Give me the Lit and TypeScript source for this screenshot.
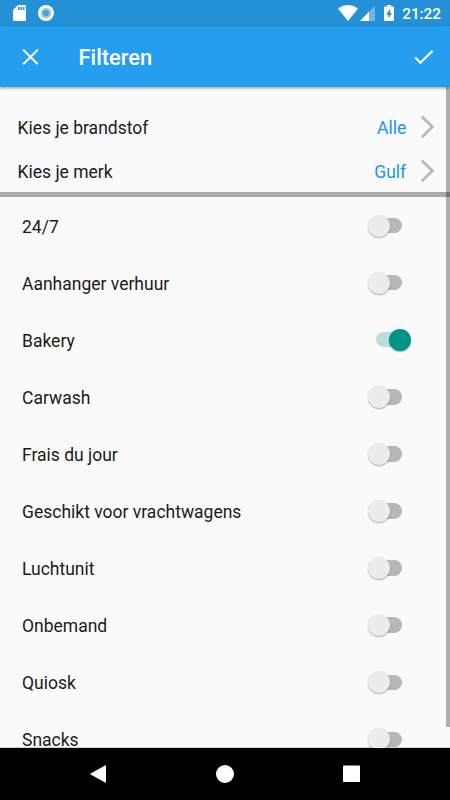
import { LitElement, html, css } from "lit";
import { customElement, property } from "lit/decorators.js";
import { classMap } from "lit/directives/class-map.js";

@customElement("toggle-switch")
class ToggleSwitch extends LitElement {
  @property({ type: Boolean }) on = false;

  static styles = css`
    :host { display: block; width: 44px; height: 22px; }
    .switch { display: grid; grid-template-columns: 44px; height: 22px; align-items: center; }
    .track, .thumb { grid-area: 1 / 1; }
    .track { width: 30.6px; height: 15.4px; border-radius: 8px; background: #b7b7b7; margin-left: 4.4px; }
    .thumb { width: 22px; height: 22px; border-radius: 50%; background: #ececec; box-shadow: 0 1px 1.5px rgba(0, 0, 0, 0.32); z-index: 1; margin-left: 0.7px; }
    .on .track { background: #b7e0dc; margin-left: 9px; }
    .on .thumb { background: #009485; margin-left: 21.7px; }
  `;

  render() {
    return html`<div class=${classMap({ switch: true, on: this.on })}>
      <div class="track"></div>
      <div class="thumb"></div>
    </div>`;
  }
}

@customElement("app-root")
class AppRoot extends LitElement {
  private choices = [
    { label: "Kies je brandstof", value: "Alle" },
    { label: "Kies je merk", value: "Gulf" },
  ];

  private facilities = [
    "24/7", "Aanhanger verhuur", "Bakery", "Carwash", "Frais du jour",
    "Geschikt voor vrachtwagens", "Luchtunit", "Onbemand", "Quiosk", "Snacks",
  ];

  static styles = css`
    :host { display: block; width: 450px; height: 800px; overflow: hidden; font-family: Roboto, sans-serif; }
    * { box-sizing: border-box; }
    svg { display: block; }
    .screen { display: flex; flex-direction: column; height: 800px; background: #fafafa; }
    .status { flex: none; height: 26px; background: #2490d5; display: flex; align-items: center; justify-content: space-between; }
    .time { color: #fff; font-size: 15.3px; font-weight: 500; line-height: 26px; padding-top: 2px; }
    .status-right { display: flex; align-items: center; padding-right: 9px; height: 26px; }
    .bar { flex: none; height: 61px; background: #259eef; display: flex; align-items: center; padding: 0 13.5px 0 17px; box-shadow: 0 1px 3px rgba(0, 0, 0, 0.4); z-index: 2; }
    .title { flex: 1; margin-left: 35.5px; color: #fff; font-size: 21.9px; font-weight: 500; line-height: 30px; padding-top: 2px; }
    .body { position: relative; flex: 1; min-height: 0; overflow: hidden; color: #1b1b1b; font-size: 17.5px; }
    .choices { padding-top: 18.6px; height: 105.4px; }
    .choice { height: 43.7px; display: flex; align-items: center; padding: 0 14.6px 0 17.5px; }
    .name { flex: 1; padding-top: 2px; }
    .value { color: #1a94f0; margin-right: 14.2px; padding-top: 2px; }
    .divider { height: 4.6px; background: #a9a9a9; }
    .row { height: 57.1px; display: flex; align-items: center; justify-content: space-between; padding: 0 38.7px 0 22px; }
    .label { padding-top: 2px; }
    .scrollbar { position: absolute; top: 0; right: 0; width: 4.4px; height: 640.4px; background: rgba(0, 0, 0, 0.3); }
    .edge { position: absolute; left: 0; right: 0; bottom: 0; height: 1px; background: #d0d0d0; }
    .nav { flex: none; height: 52.5px; background: #000; }
  `;

  render() {
    return html`<div class="screen">
      <div class="status">
        <svg width="60" height="26" viewBox="0 0 60 26">
          <path fill="#fff" d="M18 5h7q1 0 1 1v14q0 1-1 1H14q-1 0-1-1V10z" />
          <path fill="#2490d5" d="M17.9 7h1.6v3h-1.6zM20.4 7H22v3h-1.6zM22.9 7h1.6v3h-1.6z" />
          <circle cx="46" cy="13" r="8" fill="#fff" />
          <circle cx="46" cy="13" r="5.3" fill="#9bc9e9" />
          <circle cx="46" cy="13" r="3.1" fill="#4b9fd8" />
        </svg>
        <div class="status-right">
          <svg width="65" height="26" viewBox="337 0 65 26">
            <path fill="#fff" d="M338 8.400Q348 1.800 358 8.400L348 21z" />
            <path fill="#6fb7e6" d="M375 5.700V21h-15z" />
            <path fill="#fff" d="M369 11.800V21h-9z" />
            <path fill="#fff" d="M387 5h4v1.600h2q1 0 1 1V20q0 1-1 1h-8q-1 0-1-1V7.600q0-1 1-1h2z" />
            <path fill="#2490d5" d="M390 9l-3.800 5.800h2.200V18.600l3.600-5.600h-2z" />
          </svg>
          <span class="time">21:22</span>
        </div>
      </div>
      <div class="bar">
        <svg width="26" height="26" viewBox="0 0 26 26" fill="none" stroke="#fff" stroke-width="1.900">
          <path d="M6.200 5.800l14.600 14.400M20.800 5.800L6.200 20.200" />
        </svg>
        <div class="title">Filteren</div>
        <svg width="26" height="26" viewBox="0 0 26 26" fill="none" stroke="#fff" stroke-width="2.200">
          <path d="M4.200 13.500l5.200 5.300L21.600 6.800" />
        </svg>
      </div>
      <div class="body">
        <div class="choices">
          ${this.choices.map((c) => html`<div class="choice">
            <span class="name">${c.label}</span>
            <span class="value">${c.value}</span>
            <svg width="15" height="24" viewBox="0 0 15 24" fill="none" stroke="#b9b9b9" stroke-width="2.800">
              <path d="M1.800 1.400L12.400 11.800L1.800 22.200" />
            </svg>
          </div>`)}
        </div>
        <div class="divider"></div>
        ${this.facilities.map((f) => html`<div class="row">
          <span class="label">${f}</span>
          <toggle-switch ?on=${f === "Bakery"}></toggle-switch>
        </div>`)}
        <div class="scrollbar"></div>
        <div class="edge"></div>
      </div>
      <div class="nav">
        <svg width="450" height="52" viewBox="0 748 450 52" fill="#fff">
          <path d="M105 765.500q1-.6 1 .6v15.800q0 1.200-1 .6L90.700 774.600q-.9-.6 0-1.200z" />
          <circle cx="225" cy="774" r="9" />
          <rect x="343" y="765.500" width="17" height="16.500" rx=".8" />
        </svg>
      </div>
    </div>`;
  }
}
